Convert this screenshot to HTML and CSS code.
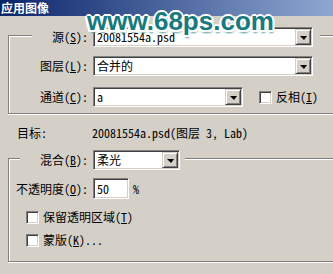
FILE: index.html
```html
<!DOCTYPE html>
<html lang="zh-CN">
<head>
  <meta charset="UTF-8" />
  <title>应用图像</title>
  <link rel="stylesheet" href="styles.css">
</head>
<body>

  <div class="titlebar">应用图像</div>
  <div class="mark">www.68ps.com</div>

  <fieldset class="group src">
    <legend>
      <div class="row">
        <span class="lbl">源(<u>S</u>):</span>
        <div class="combo wide"><span class="val">20081554a.psd</span><span class="drop"></span></div>
      </div>
    </legend>
    <div class="row">
      <span class="lbl">图层(<u>L</u>):</span>
      <div class="combo wide"><span class="val">合并的</span><span class="drop"></span></div>
    </div>
    <div class="row gap">
      <span class="lbl">通道(<u>C</u>):</span>
      <div class="combo mid"><span class="val">a</span><span class="drop"></span></div>
      <span class="cb invert"></span><span class="cbtext">反相(<u>I</u>)</span>
    </div>
  </fieldset>

  <div class="target">
    <span class="tlbl">目标:</span>
    <span>20081554a.psd(图层 3, Lab)</span>
  </div>

  <fieldset class="group blend">
    <legend>
      <div class="row">
        <span class="lbl">混合(<u>B</u>):</span>
        <div class="combo small"><span class="val">柔光</span><span class="drop"></span></div>
      </div>
    </legend>
    <div class="row tall">
      <span class="lbl">不透明度(<u>O</u>):</span>
      <div class="field">50</div>
      <span class="pct">%</span>
    </div>
    <div class="check first">
      <span class="cb"></span><span class="cbtext">保留透明区域(<u>T</u>)</span>
    </div>
    <div class="check">
      <span class="cb"></span><span class="cbtext">蒙版(<u>K</u>)...</span>
    </div>
  </fieldset>

</body>
</html>
```

FILE: styles.css
```css
body { margin: 0; width: 333px; height: 274px; overflow: hidden; position: relative; background: #d4d0c8; color: #000; font-family: "Noto Sans Mono CJK SC", "Noto Sans CJK SC", sans-serif; font-size: 12px; line-height: 16px; }
u { text-decoration: underline; text-underline-offset: 1px; }

.titlebar { height: 16px; line-height: 16px; padding-left: 1px; color: #fff; font-weight: bold; background: linear-gradient(to right, #0a246a, #8ea8d2); }

/* watermark over the dialog */
.mark { position: absolute; left: 87px; top: 6px; font-family: "Liberation Sans", Arial, sans-serif; font-weight: bold; font-size: 26px; letter-spacing: 0; line-height: 30px; color: #167a7e;
  text-shadow: -1px -1px 0 #fff, 1px -1px 0 #fff, -1px 1px 0 #fff, 1px 1px 0 #fff, 0 2px 0 #fff, 2px 0 0 #fff, 0 -2px 0 #fff, -2px 0 0 #fff, 2px 2px 0 #fff, -2px 2px 0 #fff, 1px 3px 2px #5a9a9a; }

.group { width: 345px; margin: 0 0 0 8px; padding: 0; min-width: 0; border: 1px solid #808080; border-right: none; box-shadow: inset 1px 1px 0 #fff, 0 1px 0 #fff; }
.group legend { padding: 4px 0 0 0; background: #d4d0c8; }
.src { margin-top: 7px; padding-top: 9px; padding-bottom: 6px; }
.src legend { margin-left: 23px; padding-right: 7px; }
.src legend .lbl { width: 56px; }
.blend { margin-top: 5px; padding-top: 8px; padding-bottom: 13px; }
.blend legend { margin-left: 11px; padding-right: 5px; }
.blend legend .lbl { width: 68px; }

.row { display: flex; align-items: center; height: 20px; }
.row.gap { margin-top: 11px; }
.row.tall { height: 21px; }
.lbl { width: 79px; flex: none; text-align: right; white-space: nowrap; margin-right: 5px; }

.combo { height: 20px; box-sizing: border-box; display: flex; align-items: center; background: #fff; border: 1px solid; border-color: #808080 #fff #fff #808080; box-shadow: inset 1px 1px 0 #404040, inset -1px -1px 0 #d4d0c8; }
.combo.wide { width: 220px; }
.combo.mid { width: 150px; }
.combo.small { width: 87px; }
.val { flex: 1; padding-left: 3px; white-space: nowrap; overflow: hidden; }
.drop { width: 16px; height: 16px; box-sizing: border-box; margin-right: 1px; flex: none; display: flex; align-items: center; justify-content: center; background: #d4d0c8; border: 1px solid; border-color: #d4d0c8 #404040 #404040 #d4d0c8; box-shadow: inset 1px 1px 0 #fff, inset -1px -1px 0 #808080; }
.drop::after { content: ""; border-left: 4px solid transparent; border-right: 3px solid transparent; border-top: 4px solid #000; margin-top: 1px; }

.field { width: 36px; height: 21px; box-sizing: border-box; padding-left: 3px; line-height: 19px; background: #fff; border: 1px solid; border-color: #808080 #fff #fff #808080; box-shadow: inset 1px 1px 0 #404040, inset -1px -1px 0 #d4d0c8; }
.pct { margin-left: 4px; }

.cb { width: 13px; height: 13px; box-sizing: border-box; flex: none; background: #fff; border: 1px solid; border-color: #808080 #fff #fff #808080; box-shadow: inset 1px 1px 0 #404040, inset -1px -1px 0 #d4d0c8; }
.cb.invert { margin-left: 16px; }
.cbtext { margin-left: 4px; white-space: nowrap; }
.check { display: flex; align-items: center; height: 16px; padding-left: 17px; margin-top: 7px; }
.check.first { margin-top: 10px; }

.target { display: flex; height: 16px; margin-top: 11px; padding-left: 17px; }
.tlbl { width: 75px; }
```
